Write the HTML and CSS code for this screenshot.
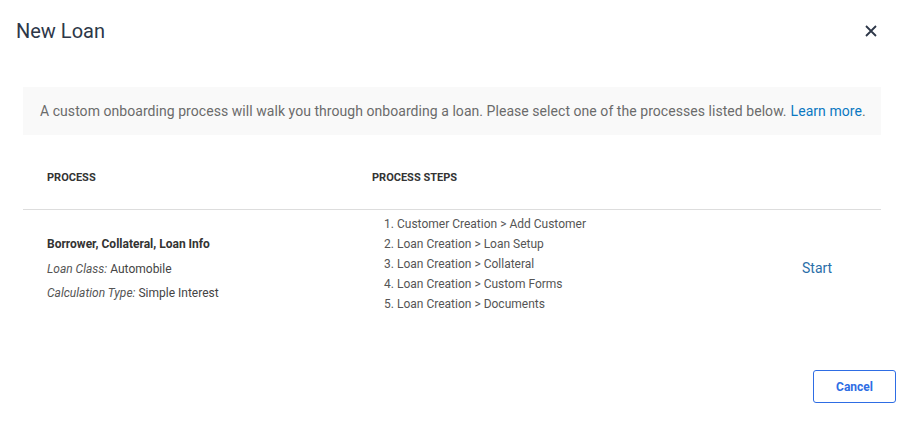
FILE: index.html
```html
<!DOCTYPE html>
<html lang="en">
<head>
<meta charset="utf-8">
<title>New Loan</title>
<link rel="stylesheet" href="styles.css">
</head>
<body>
<div class="dialog">
  <header class="dialog-header">
    <h1 class="dialog-title">New Loan</h1>
    <button class="close-btn" aria-label="Close">
      <svg width="12" height="12" viewBox="0 0 12 12"><path d="M1 1L11 11M11 1L1 11" stroke="#2d3748" stroke-width="1.8" fill="none"/></svg>
    </button>
  </header>
  <div class="content">
    <div class="info-box">A custom onboarding process will walk you through onboarding a loan. Please select one of the processes listed below. <a class="link" href="#">Learn more</a>.</div>
    <table class="process-table">
      <colgroup><col class="col-process"><col class="col-steps"><col class="col-action"></colgroup>
      <thead>
        <tr><th>Process</th><th>Process Steps</th><th></th></tr>
      </thead>
      <tbody>
        <tr>
          <td class="cell-process">
            <div class="proc-name">Borrower, Collateral, Loan Info</div>
            <div class="proc-meta"><em>Loan Class:</em> Automobile</div>
            <div class="proc-meta"><em>Calculation Type:</em> Simple Interest</div>
          </td>
          <td class="cell-steps">
            <ol class="steps">
              <li>Customer Creation &gt; Add Customer</li>
              <li>Loan Creation &gt; Loan Setup</li>
              <li>Loan Creation &gt; Collateral</li>
              <li>Loan Creation &gt; Custom Forms</li>
              <li>Loan Creation &gt; Documents</li>
            </ol>
          </td>
          <td class="cell-action"><a class="start-link" href="#">Start</a></td>
        </tr>
      </tbody>
    </table>
  </div>
  <footer class="dialog-footer">
    <button class="cancel-btn">Cancel</button>
  </footer>
</div>
</body>
</html>
```

FILE: styles.css
```css
* { box-sizing: border-box; }
html, body { margin: 0; padding: 0; background: #fff; }
body { font-family: Roboto, "Liberation Sans", Arial, sans-serif; color: #333; width: 904px; height: 433px; overflow: hidden; }
.dialog { display: flex; flex-direction: column; height: 433px; }
.dialog-header { display: flex; justify-content: space-between; align-items: center; padding: 19px 27px 0 16px; height: 24px; box-sizing: content-box; }
.dialog-title { margin: 0; font-size: 20px; font-weight: 400; color: #2d3748; line-height: 24px; }
.close-btn { border: 0; background: none; padding: 0; width: 12px; height: 12px; display: flex; cursor: pointer; }
.content { padding: 44px 23px 0; }
.info-box { background: #f9f9f9; height: 48px; display: flex; align-items: center; padding: 0 17px; font-size: 14px; color: #6b6b6b; white-space: nowrap; letter-spacing: 0.05px; }
.link { color: #0b78c2; text-decoration: none; margin-left: 4px; }
.process-table { width: 858px; border-collapse: collapse; table-layout: fixed; margin-top: 15px; }
.col-process { width: 325px; }
.col-steps { width: 430px; }
.col-action { width: 103px; }
.process-table th { text-align: left; text-transform: uppercase; font-size: 11px; font-weight: 700; color: #333; line-height: 16px; padding: 20px 24px 23px; border-bottom: 1px solid #ddd; }
.process-table td { vertical-align: middle; padding: 0 24px; font-size: 12px; color: #444; }
.cell-process { padding-top: 2px !important; }
.cell-process div { line-height: 24.5px; }
.proc-name { font-weight: 700; color: #333; }
.proc-meta em { color: #555; }
.cell-steps { padding-top: 4px !important; padding-bottom: 12px !important; }
.steps { margin: 0; padding-left: 25px; line-height: 20px; color: #555; }
.start-link { color: #2a6ea8; text-decoration: none; font-size: 14px; }
.dialog-footer { display: flex; justify-content: flex-end; padding: 44px 8px 0; }
.cancel-btn { width: 83px; height: 33px; border: 1px solid #2e6de4; border-radius: 3px; background: #fff; color: #2e6de4; font-family: Roboto, "Liberation Sans", Arial, sans-serif; font-size: 12px; font-weight: 700; cursor: pointer; }
```
